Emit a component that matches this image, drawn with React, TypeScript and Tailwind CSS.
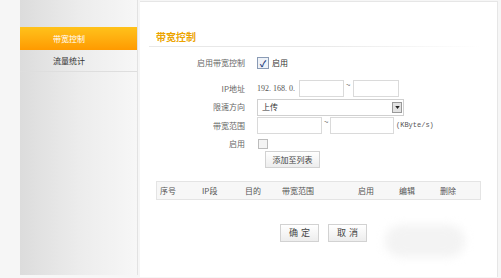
import React from 'react';

const font = { fontFamily: '"Noto Sans CJK SC", "Liberation Sans", sans-serif' };

const headers = [
  { label: '序号', w: 'w-[42px]' },
  { label: 'IP段', w: 'w-[43px]' },
  { label: '目的', w: 'w-[37px]' },
  { label: '带宽范围', w: 'w-[76px]' },
  { label: '启用', w: 'w-[41px]' },
  { label: '编辑', w: 'w-[41px]' },
  { label: '删除', w: 'w-[40px]' },
];

function Row({ label, h, children }: { label: string; h: string; children?: React.ReactNode }) {
  return (
    <div className={`flex items-center ${h}`}>
      <div className="w-[89px] text-right text-[8px] text-[#666]">{label}</div>
      <div className="ml-[12px] flex items-center">{children}</div>
    </div>
  );
}

export default function App() {
  return (
    <div className="w-[501px] h-[278px] bg-[#f6f6f6] flex overflow-hidden relative" style={font}>
      {/* sidebar */}
      <div className="ml-[20px] w-[118px] h-[275px] bg-gradient-to-r from-[#dcdcdc] via-[#ececec] to-[#f7f7f7] border-r border-[#e2e2e2] pt-[27px]">
        <div className="h-[23px] bg-gradient-to-b from-[#ffc21a] to-[#ff9a00] flex items-center pl-[33px] text-[8px] text-white">
          带宽控制
        </div>
        <div className="h-[22px] flex items-center pl-[33px] text-[8px] text-[#333] border-b border-[#dedede]">
          流量统计
        </div>
      </div>

      {/* content */}
      <div className="ml-[2px] mt-[1px] w-[358px] h-[276px] bg-white border-t border-r border-[#e6e6e6] pl-[16px] pr-[16px]">
        <div className="mt-[29px] text-[10px] font-bold text-[#eca400] leading-[12px]">带宽控制</div>
        <div className="mt-[3px] -ml-[7px] h-px w-[332px] bg-gradient-to-r from-[#e8e8e8] via-[#e8e8e8] to-white" />

        <Row label="启用带宽控制" h="mt-[9px] h-[14px]">
          <span className="w-[12px] h-[12px] border border-[#8a9bb5] bg-[#eef2f8] flex items-center justify-center text-[9px] font-bold leading-none text-[#1f3d7a]">✓</span>
          <span className="ml-[3px] text-[8px] text-[#333]">启用</span>
        </Row>

        <Row label="IP地址" h="mt-[10px] h-[17px]">
          <span className="w-[40px] text-[8px] text-[#555]" style={{ fontFamily: '"Liberation Serif", serif' }}>192. 168. 0.</span>
          <span className="ml-[2px] w-[45px] h-[17px] border border-[#dadada]" />
          <span className="ml-[2px] w-[7px] text-[8px] text-[#666] -mt-[8px]">~</span>
          <span className="w-[46px] h-[17px] border border-[#dadada]" />
        </Row>

        <Row label="限速方向" h="mt-[1px] h-[18px]">
          <div className="w-[147px] h-[17px] border border-[#d0d0d0] flex items-center justify-between">
            <span className="ml-[4px] text-[8px] text-[#333]">上传</span>
            <span className="w-[10px] h-[11px] mr-[1px] border border-[#999] bg-[#e2e2e2] flex items-center justify-center">
              <svg width="5" height="3" viewBox="0 0 6 4"><path d="M0 0h6L3 4z" fill="#222" /></svg>
            </span>
          </div>
        </Row>

        <Row label="带宽范围" h="mt-[1px] h-[17px]">
          <span className="w-[65px] h-[17px] border border-[#dadada]" />
          <span className="ml-[2px] w-[6px] text-[8px] text-[#666] -mt-[8px]">~</span>
          <span className="w-[64px] h-[17px] border border-[#dadada]" />
          <span className="ml-[2px] text-[7px] text-[#555]" style={{ fontFamily: '"Liberation Mono", monospace' }}>(KByte/s)</span>
        </Row>

        <Row label="启用" h="mt-[1px] h-[17px]">
          <span className="ml-[1px] w-[10px] h-[10px] border border-[#bcbcbc] bg-[#f4f4f4]" />
        </Row>

        <div className="ml-[109px] -mt-[1px] w-[55px] h-[17px] border border-[#d2d2d2] bg-gradient-to-b from-white to-[#ededed] flex items-center justify-center text-[8px] text-[#444]">
          添加至列表
        </div>

        <div className="mt-[13px] w-[325px] h-[19px] border border-[#e4e4e4] bg-[#f7f7f7] flex items-center">
          {headers.map((h) => (
            <div key={h.label} className={`${h.w} pl-[3px] text-[8px] text-[#555]`}>
              {h.label}
            </div>
          ))}
        </div>

        <div className="mt-[24px] ml-[124px] flex gap-[9px]">
          <div className="w-[39px] h-[18px] border border-[#d2d2d2] bg-gradient-to-b from-white to-[#ededed] flex items-center justify-center text-[9px] text-[#444] tracking-[3px] pl-[3px]">确定</div>
          <div className="w-[39px] h-[18px] border border-[#d2d2d2] bg-gradient-to-b from-white to-[#ededed] flex items-center justify-center text-[9px] text-[#444] tracking-[3px] pl-[3px]">取消</div>
        </div>
      </div>

      {/* faint watermark blur */}
      <div className="absolute left-[385px] top-[225px] w-[80px] h-[32px] bg-[#f3f3f3] blur-[5px] rounded-full" />
    </div>
  );
}
